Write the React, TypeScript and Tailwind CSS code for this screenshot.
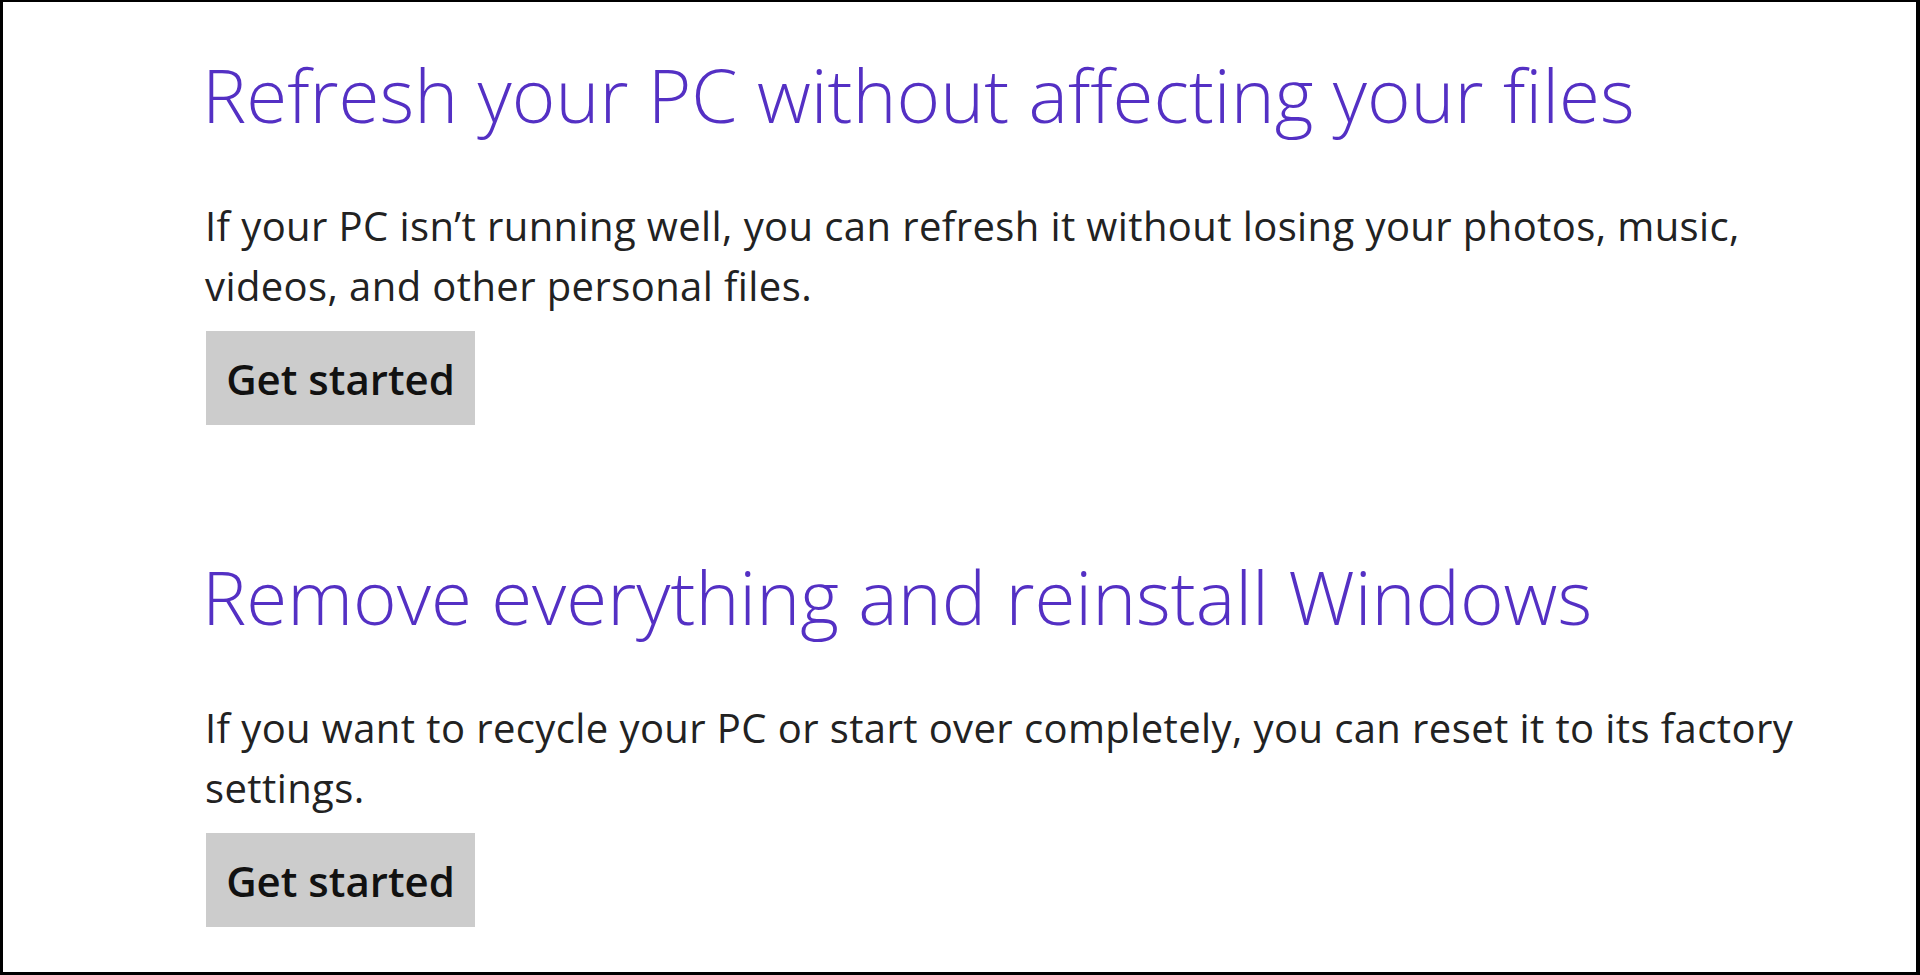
import React from "react";

function Section({
  title,
  lines,
  className,
}: {
  title: string;
  lines: string[];
  className?: string;
}) {
  return (
    <section className={className}>
      <h1 className="-ml-[3px] text-[74.5px] font-light leading-[106px] text-[#5430c4] whitespace-nowrap">
        {title}
      </h1>
      <p className="mt-[49px] text-[40px] leading-[60px] tracking-[0.4px] text-[#222222] whitespace-nowrap">
        {lines[0]}
        <br />
        {lines[1]}
      </p>
      <button className="ml-px mt-[15px] flex h-[94px] w-[269px] items-center justify-center bg-[#cccccc] text-[42px] font-semibold text-[#111111]">
        Get started
      </button>
    </section>
  );
}

export default function App() {
  return (
    <div
      className="box-border h-[975px] w-[1920px] overflow-hidden border-t-2 border-r-4 border-b-[3px] border-l-[3px] border-black bg-white pl-[202px] pt-[39px]"
      style={{ fontFamily: '"Open Sans", "Noto Sans", sans-serif' }}
    >
      <Section
        title="Refresh your PC without affecting your files"
        lines={[
          "If your PC isn\u2019t running well, you can refresh it without losing your photos, music,",
          "videos, and other personal files.",
        ]}
      />
      <Section
        className="mt-[118px]"
        title="Remove everything and reinstall Windows"
        lines={[
          "If you want to recycle your PC or start over completely, you can reset it to its factory",
          "settings.",
        ]}
      />
    </div>
  );
}
